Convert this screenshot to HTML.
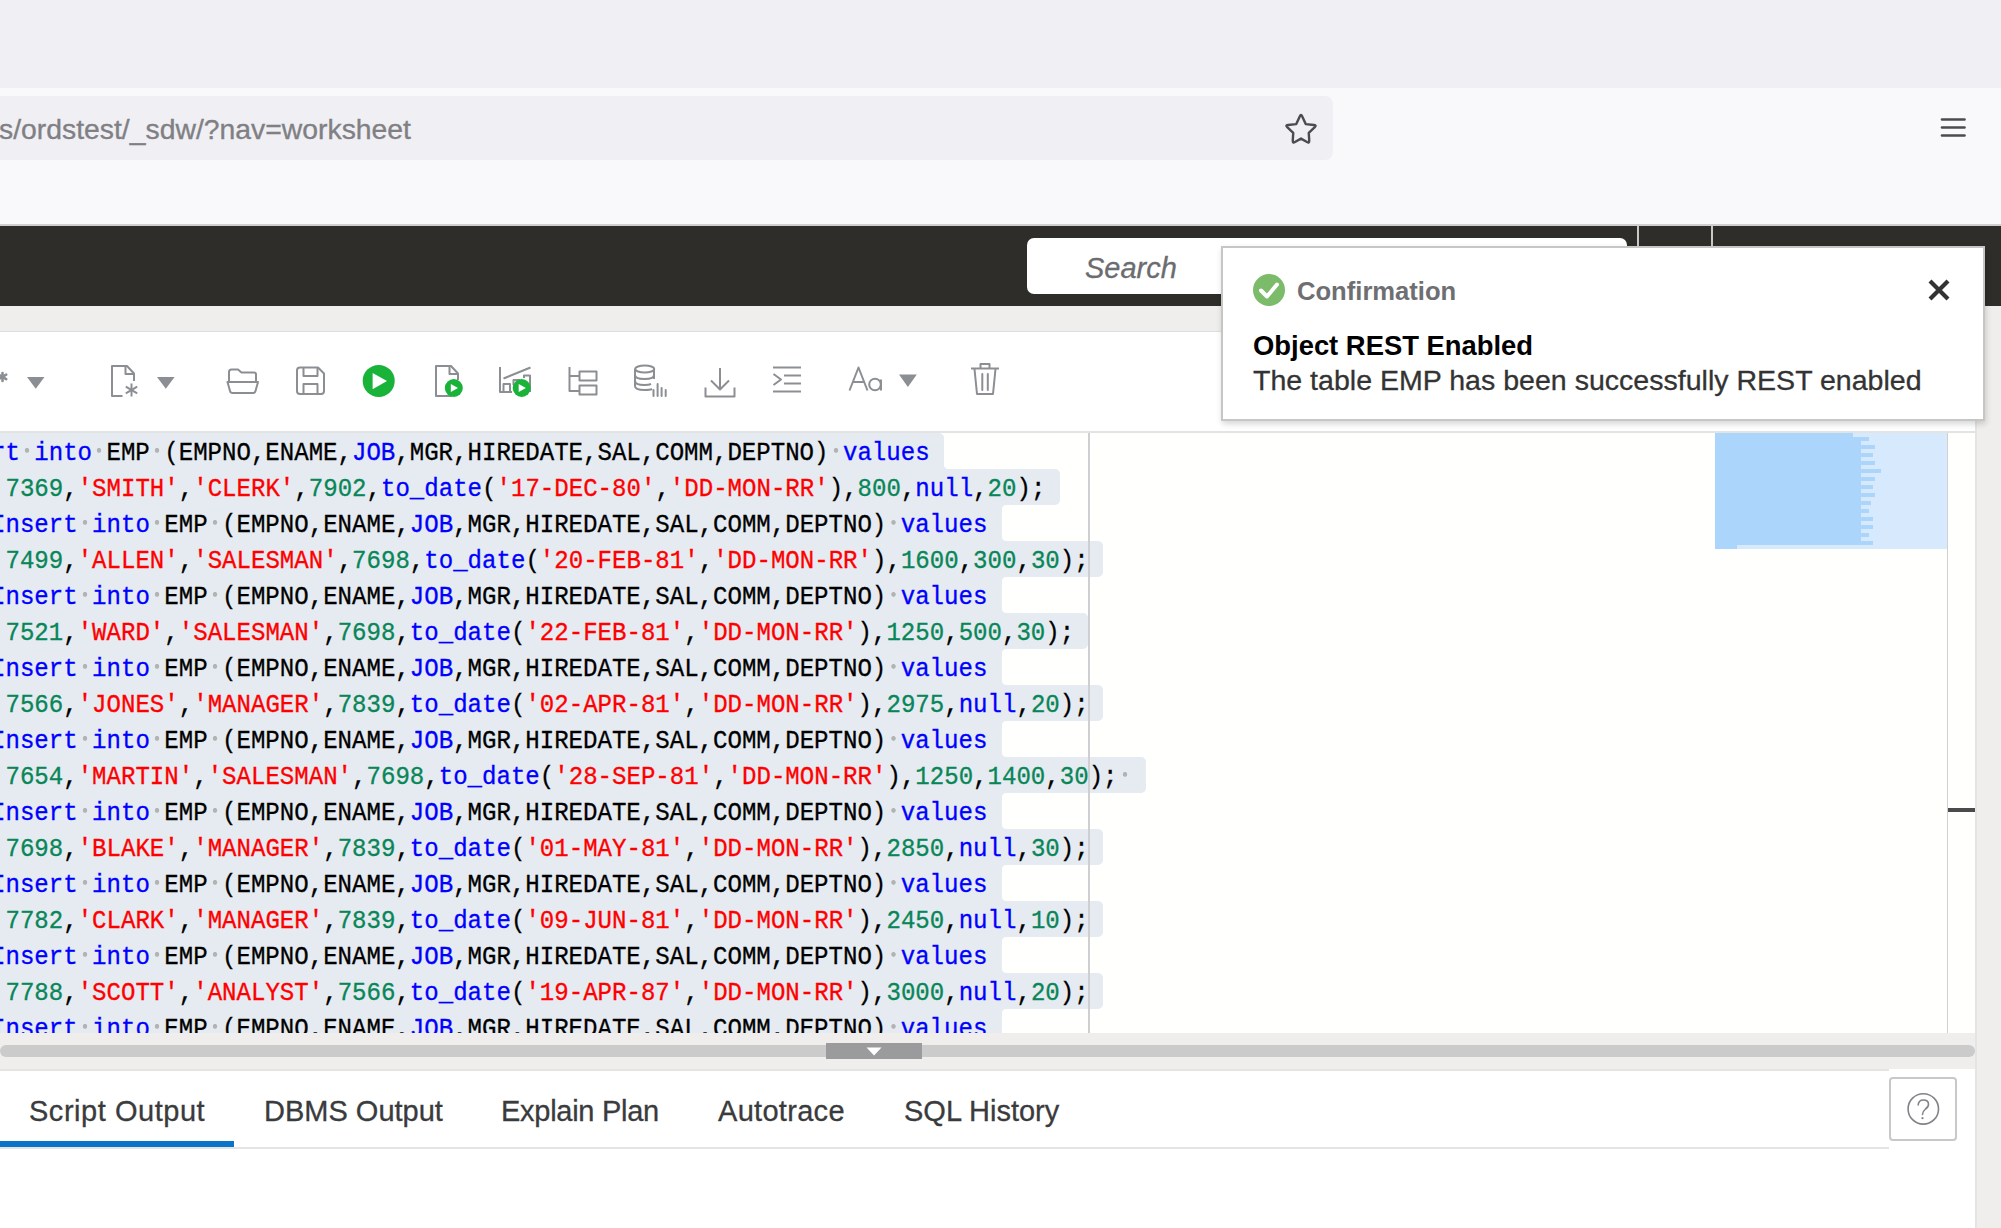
<!DOCTYPE html>
<html><head><meta charset="utf-8">
<style>
*{margin:0;padding:0;box-sizing:border-box}
html,body{width:2001px;height:1228px;overflow:hidden;background:#fff;font-family:"Liberation Sans",sans-serif}
.a{position:absolute}
#tabstrip{left:0;top:0;width:2001px;height:88px;background:#f0eff4}
#toolbar{left:0;top:88px;width:2001px;height:136px;background:#f9f9fb}
#tbline{left:0;top:224px;width:2001px;height:2px;background:#cfcfd1}
#url{left:-20px;top:96px;width:1353px;height:64px;background:#f0f0f4;border-radius:8px}
#urltext{left:-1px;top:112.5px;font-size:28.35px;color:#808084;-webkit-text-stroke:0.35px #808084;white-space:nowrap;letter-spacing:0}
#darkbar{left:0;top:226px;width:2001px;height:80px;background:#2e2d29}
#sep1{left:1637px;top:226px;width:2px;height:30px;background:#c9c9c9}
#sep2{left:1711px;top:226px;width:2px;height:30px;background:#c9c9c9}
#search{left:1027px;top:238px;width:600px;height:56px;background:#fff;border-radius:7px}
#searchtext{left:1085px;top:252px;font-size:29px;font-style:italic;color:#6b6c70;-webkit-text-stroke:0.3px #6b6c70;white-space:nowrap}
#band{left:0;top:306px;width:2001px;height:922px;background:#efeeec}
#bandedge{left:1975px;top:306px;width:2px;height:922px;background:#e3e4e4}
#panel{left:0;top:331px;width:1975px;height:897px;background:#fff;border-top:1px solid #dedede}
#editor{left:0;top:431px;width:1975px;height:602px;background:#fffffe;overflow:hidden;border-top:2px solid #e2e4e4}
#split{left:0;top:1033px;width:1975px;height:36px;background:#efeeec}
#splitbar{left:0;top:1045px;width:1975px;height:12px;background:#cbcbcb;border-radius:6px}
#handle{left:826px;top:1043px;width:96px;height:16px;background:#9b9b9d}
#tabs{left:0;top:1069px;width:1975px;height:159px;background:#fff}
#tabtop{left:0;top:1069px;width:1889px;height:2px;background:#e4e4e4}
#tabbot{left:0;top:1147px;width:1889px;height:2px;background:#e4e4e4}
#tabul{left:0;top:1141px;width:234px;height:6px;background:#0b74c8}
.tab{position:absolute;top:1095px;font-size:29px;color:#3a3b3d;-webkit-text-stroke:0.3px #3a3b3d;white-space:nowrap}
#help{left:1889px;top:1077px;width:68px;height:64px;border:2px solid #c8c8c8;border-radius:4px;background:#fff}
.sl{position:absolute;height:36px;background:#e5ebf1}
.fl{position:absolute;width:5px;height:5px}
.ln{position:absolute;height:36px;line-height:36px;margin-top:2.6px;transform:scaleY(1.09);transform-origin:0 24.4px;font-family:"Liberation Mono",monospace;font-size:24.07px;white-space:pre;color:#000;-webkit-text-stroke:0.3px currentColor}
.k{color:#0000ff}.i{color:#000}.s{color:#ff0000}.n{color:#098658}.p{color:#000}.w{display:inline-block;width:14.44px;height:36px;vertical-align:top;background:radial-gradient(circle at 50% 15.2px,#b3b3b3 1.8px,rgba(179,179,179,0) 2.6px)}
#margin{left:1087.5px;top:0;width:2px;height:600px;background:#cfcfd2}
#mm1{left:1715px;top:0;width:232px;height:116px;background:#d6e9fd}
#mmline{left:1947px;top:0;width:1px;height:600px;background:#d0d0d0}
#mmark{left:1948px;top:375px;width:27px;height:4px;background:#4a4b4d}
#toast{left:1221px;top:246px;width:764px;height:175px;background:#fff;border:2px solid #c6c6c6;box-shadow:1px 3px 6px rgba(0,0,0,0.16)}
#t1{left:1297px;top:277px;font-size:25.6px;font-weight:bold;color:#6e6f72;white-space:nowrap}
#t2{left:1253px;top:330px;font-size:27.4px;font-weight:bold;color:#000;white-space:nowrap}
#t3{left:1253px;top:364px;font-size:28.55px;color:#333;-webkit-text-stroke:0.3px #333;white-space:nowrap}
</style></head><body>
<div id="tabstrip" class="a"></div>
<div id="toolbar" class="a"></div>
<div id="tbline" class="a"></div>
<div id="url" class="a"></div>
<div id="urltext" class="a">s/ordstest/_sdw/?nav=worksheet</div>
<svg class="a" style="left:0;top:0" width="2001" height="226">
<path d="M1296.50 123.80 L1299.92 116.36 Q1301.00 114.00 1302.08 116.36 L1305.50 123.80 L1313.42 124.70 Q1316.00 125.00 1314.11 126.79 L1308.40 132.20 L1308.84 139.60 Q1309.00 142.20 1306.75 140.90 L1301.00 137.60 L1295.25 140.90 Q1293.00 142.20 1293.16 139.60 L1293.60 132.20 L1287.89 126.79 Q1286.00 125.00 1288.58 124.70 Z" fill="none" stroke="#4b4c50" stroke-width="2.3" stroke-linejoin="round" transform="translate(1301 128.5) scale(1.05) translate(-1301 -128)"/>
<g stroke="#4b4c50" stroke-width="2.6" stroke-linecap="round"><line x1="1942" y1="119.5" x2="1964.5" y2="119.5"/><line x1="1942" y1="127.5" x2="1964.5" y2="127.5"/><line x1="1942" y1="135.5" x2="1964.5" y2="135.5"/></g>
</svg>
<div id="darkbar" class="a"></div>
<div id="sep1" class="a"></div>
<div id="sep2" class="a"></div>
<div id="search" class="a"></div>
<div id="searchtext" class="a">Search</div>
<div id="band" class="a"></div>
<div id="bandedge" class="a"></div>
<div id="panel" class="a"></div>
<svg class="a" style="left:0;top:340px" width="1100" height="70" viewBox="0 340 1100 70">
<g fill="none" stroke="#8b8e92" stroke-width="2" stroke-linejoin="round">
 <!-- partial asterisk -->
 <g stroke-width="2.6" stroke-linecap="round"><line x1="2.5" y1="373" x2="2.5" y2="381"/><line x1="-1.5" y1="374.7" x2="6.2" y2="379.2"/><line x1="-1.5" y1="379.2" x2="6.2" y2="374.7"/></g>
 <!-- new doc -->
 <path d="M122.5 396 L112 396 L112 366 L127 366 L134 373.5 L134 381"/>
 <path d="M125.5 366 L125.5 374 L134 374"/>
 <line x1="131.5" y1="383.5" x2="131.5" y2="396.5"/><line x1="125.8" y1="386.7" x2="137.2" y2="393.3"/><line x1="125.8" y1="393.3" x2="137.2" y2="386.7"/>
 <!-- folder -->
 <path d="M229 381 L229 372 Q229 369.5 231.5 369.5 L238 369.5 L241.5 372.5 L254 372.5 Q256 372.5 256 374.5 L256 381"/>
 <path d="M227.5 382 L258 382 L255.5 391 Q255 393 253 393 L232.5 393 Q230.5 393 230 391 Z"/>
 <!-- save -->
 <path d="M300 367.5 L318 367.5 L324 373.5 L324 391 Q324 394 321 394 L300 394 Q297 394 297 391 L297 370.5 Q297 367.5 300 367.5 Z"/>
 <path d="M303.5 367.5 L303.5 376 L317.5 376 L317.5 368"/>
 <path d="M303.5 394 L303.5 384 L317.5 384 L317.5 394"/>
 <!-- run script doc -->
 <path d="M452 396 L436 396 L436 366 L451 366 L458 373.5 L458 380"/>
 <path d="M449.5 366 L449.5 374 L458 374"/>
 <!-- chart -->
 <path d="M500 367 L500 392 L512 392"/>
 <path d="M503.5 392 L503.5 384 L510 384 L510 392"/>
 <path d="M513.5 385 L513.5 380 L520 380"/>
 <path d="M524 378 L524 375.5 L530 375.5 L530 392"/>
 <line x1="503.5" y1="378.5" x2="530.5" y2="367.5"/>
 <!-- tree -->
 <path d="M569.5 367 L569.5 391 L579.5 391"/>
 <line x1="569.5" y1="376" x2="579.5" y2="376"/>
 <rect x="579.5" y="371.5" width="17" height="9"/>
 <rect x="579.5" y="385.5" width="17" height="9"/>
 <!-- db -->
 <ellipse cx="644.7" cy="369" rx="9.5" ry="3.6"/>
 <path d="M635 369 L635 386 Q635 390 644.5 390 Q650 390 652 389"/>
 <path d="M654 369 L654 379"/>
 <path d="M635 375 Q635 379 644.5 379 Q654 379 654 375"/>
 <path d="M635 381 Q635 385 644.5 385 Q649 385 651 384"/>
 <g stroke-linecap="round"><line x1="653.5" y1="390" x2="653.5" y2="396"/><line x1="657.6" y1="384" x2="657.6" y2="396"/><line x1="661.6" y1="388" x2="661.6" y2="396"/><line x1="665.7" y1="390" x2="665.7" y2="396"/></g>
 <!-- download -->
 <line x1="720" y1="368" x2="720" y2="389"/>
 <path d="M711 380.5 L720 389.5 L729 380.5"/>
 <path d="M705.5 387.5 L705.5 396.5 L734.5 396.5 L734.5 387.5"/>
 <!-- format -->
 <line x1="773" y1="367.5" x2="801" y2="367.5"/><line x1="784" y1="375.5" x2="801" y2="375.5"/><line x1="784" y1="383.5" x2="801" y2="383.5"/><line x1="773" y1="391.5" x2="801" y2="391.5"/>
 <path d="M773.5 374 L781 379.5 L773.5 385"/>
 <!-- Aa -->
 <path d="M849.5 390.5 L858.5 367.5 L867.5 390.5"/>
 <line x1="852.8" y1="382" x2="864.2" y2="382"/>
 <circle cx="875" cy="384.5" r="5.8"/>
 <line x1="881" y1="379.5" x2="881" y2="390.5"/>
 <!-- trash -->
 <line x1="971" y1="368.5" x2="999" y2="368.5"/>
 <path d="M980.5 368 L980.5 364 L989.5 364 L989.5 368"/>
 <path d="M974.5 369 L977 394 L993 394 L995.5 369"/>
 <g stroke-linecap="round"><line x1="982.3" y1="374" x2="982.3" y2="390"/><line x1="987.8" y1="374" x2="987.8" y2="390"/></g>
</g>
<g fill="#8b8e92">
 <path d="M27 377 L44.5 377 L35.75 388.7 Z"/>
 <path d="M157 377 L174.6 377 L165.8 388.7 Z"/>
 <path d="M899 374.5 L916.8 374.5 L907.9 387 Z"/>
</g>
<g fill="#19b33a">
 <circle cx="378.7" cy="380.9" r="16"/>
 <circle cx="453.8" cy="388" r="9"/>
 <circle cx="521.7" cy="388" r="9"/>
</g>
<g fill="#fff">
 <path d="M372.6 372.9 L387 381 L372.6 389.3 Z"/>
 <path d="M450.8 384 L458 388 L450.8 392 Z"/>
 <path d="M518.7 384 L525.9 388 L518.7 392 Z"/>
</g>
</svg>
<div id="editor" class="a">
<div class="sl" style="top:0px;left:-20px;width:964.0px;border-radius:0 5px 0px 0"></div>
<div class="fl" style="top:31px;left:944.0px;background:radial-gradient(circle at 100% 0,#fffffe 5px,#e5ebf1 5.6px)"></div>
<div class="sl" style="top:36px;left:-20px;width:1079.6px;border-radius:0 5px 5px 0"></div>
<div class="fl" style="top:72px;left:1001.8px;background:radial-gradient(circle at 100% 100%,#fffffe 5px,#e5ebf1 5.6px)"></div>
<div class="sl" style="top:72px;left:-20px;width:1021.8px;border-radius:0 0px 0px 0"></div>
<div class="fl" style="top:103px;left:1001.8px;background:radial-gradient(circle at 100% 0,#fffffe 5px,#e5ebf1 5.6px)"></div>
<div class="sl" style="top:108px;left:-20px;width:1122.9px;border-radius:0 5px 5px 0"></div>
<div class="fl" style="top:144px;left:1001.8px;background:radial-gradient(circle at 100% 100%,#fffffe 5px,#e5ebf1 5.6px)"></div>
<div class="sl" style="top:144px;left:-20px;width:1021.8px;border-radius:0 0px 0px 0"></div>
<div class="fl" style="top:175px;left:1001.8px;background:radial-gradient(circle at 100% 0,#fffffe 5px,#e5ebf1 5.6px)"></div>
<div class="sl" style="top:180px;left:-20px;width:1108.4px;border-radius:0 5px 5px 0"></div>
<div class="fl" style="top:216px;left:1001.8px;background:radial-gradient(circle at 100% 100%,#fffffe 5px,#e5ebf1 5.6px)"></div>
<div class="sl" style="top:216px;left:-20px;width:1021.8px;border-radius:0 0px 0px 0"></div>
<div class="fl" style="top:247px;left:1001.8px;background:radial-gradient(circle at 100% 0,#fffffe 5px,#e5ebf1 5.6px)"></div>
<div class="sl" style="top:252px;left:-20px;width:1122.9px;border-radius:0 5px 5px 0"></div>
<div class="fl" style="top:288px;left:1001.8px;background:radial-gradient(circle at 100% 100%,#fffffe 5px,#e5ebf1 5.6px)"></div>
<div class="sl" style="top:288px;left:-20px;width:1021.8px;border-radius:0 0px 0px 0"></div>
<div class="fl" style="top:319px;left:1001.8px;background:radial-gradient(circle at 100% 0,#fffffe 5px,#e5ebf1 5.6px)"></div>
<div class="sl" style="top:324px;left:-20px;width:1166.2px;border-radius:0 5px 5px 0"></div>
<div class="fl" style="top:360px;left:1001.8px;background:radial-gradient(circle at 100% 100%,#fffffe 5px,#e5ebf1 5.6px)"></div>
<div class="sl" style="top:360px;left:-20px;width:1021.8px;border-radius:0 0px 0px 0"></div>
<div class="fl" style="top:391px;left:1001.8px;background:radial-gradient(circle at 100% 0,#fffffe 5px,#e5ebf1 5.6px)"></div>
<div class="sl" style="top:396px;left:-20px;width:1122.9px;border-radius:0 5px 5px 0"></div>
<div class="fl" style="top:432px;left:1001.8px;background:radial-gradient(circle at 100% 100%,#fffffe 5px,#e5ebf1 5.6px)"></div>
<div class="sl" style="top:432px;left:-20px;width:1021.8px;border-radius:0 0px 0px 0"></div>
<div class="fl" style="top:463px;left:1001.8px;background:radial-gradient(circle at 100% 0,#fffffe 5px,#e5ebf1 5.6px)"></div>
<div class="sl" style="top:468px;left:-20px;width:1122.9px;border-radius:0 5px 5px 0"></div>
<div class="fl" style="top:504px;left:1001.8px;background:radial-gradient(circle at 100% 100%,#fffffe 5px,#e5ebf1 5.6px)"></div>
<div class="sl" style="top:504px;left:-20px;width:1021.8px;border-radius:0 0px 0px 0"></div>
<div class="fl" style="top:535px;left:1001.8px;background:radial-gradient(circle at 100% 0,#fffffe 5px,#e5ebf1 5.6px)"></div>
<div class="sl" style="top:540px;left:-20px;width:1122.9px;border-radius:0 5px 5px 0"></div>
<div class="fl" style="top:576px;left:1001.8px;background:radial-gradient(circle at 100% 100%,#fffffe 5px,#e5ebf1 5.6px)"></div>
<div class="sl" style="top:576px;left:-20px;width:1021.8px;border-radius:0 0px 5px 0"></div>
<div class="ln" style="top:0px;left:-66.8px"><span class="k">Insert</span><span class="w"> </span><span class="k">into</span><span class="w"> </span><span class="i">EMP</span><span class="w"> </span><span class="p">(EMPNO,ENAME,</span><span class="k">JOB</span><span class="p">,MGR,HIREDATE,SAL,COMM,DEPTNO)</span><span class="w"> </span><span class="k">values</span></div>
<div class="ln" style="top:36px;left:-9.0px"><span class="p"> </span><span class="n">7369</span><span class="p">,</span><span class="s">&#x27;SMITH&#x27;</span><span class="p">,</span><span class="s">&#x27;CLERK&#x27;</span><span class="p">,</span><span class="n">7902</span><span class="p">,</span><span class="k">to_date</span><span class="p">(</span><span class="s">&#x27;17-DEC-80&#x27;</span><span class="p">,</span><span class="s">&#x27;DD-MON-RR&#x27;</span><span class="p">),</span><span class="n">800</span><span class="p">,</span><span class="k">null</span><span class="p">,</span><span class="n">20</span><span class="p">);</span></div>
<div class="ln" style="top:72px;left:-9.0px"><span class="k">Insert</span><span class="w"> </span><span class="k">into</span><span class="w"> </span><span class="i">EMP</span><span class="w"> </span><span class="p">(EMPNO,ENAME,</span><span class="k">JOB</span><span class="p">,MGR,HIREDATE,SAL,COMM,DEPTNO)</span><span class="w"> </span><span class="k">values</span></div>
<div class="ln" style="top:108px;left:-9.0px"><span class="p"> </span><span class="n">7499</span><span class="p">,</span><span class="s">&#x27;ALLEN&#x27;</span><span class="p">,</span><span class="s">&#x27;SALESMAN&#x27;</span><span class="p">,</span><span class="n">7698</span><span class="p">,</span><span class="k">to_date</span><span class="p">(</span><span class="s">&#x27;20-FEB-81&#x27;</span><span class="p">,</span><span class="s">&#x27;DD-MON-RR&#x27;</span><span class="p">),</span><span class="n">1600</span><span class="p">,</span><span class="n">300</span><span class="p">,</span><span class="n">30</span><span class="p">);</span></div>
<div class="ln" style="top:144px;left:-9.0px"><span class="k">Insert</span><span class="w"> </span><span class="k">into</span><span class="w"> </span><span class="i">EMP</span><span class="w"> </span><span class="p">(EMPNO,ENAME,</span><span class="k">JOB</span><span class="p">,MGR,HIREDATE,SAL,COMM,DEPTNO)</span><span class="w"> </span><span class="k">values</span></div>
<div class="ln" style="top:180px;left:-9.0px"><span class="p"> </span><span class="n">7521</span><span class="p">,</span><span class="s">&#x27;WARD&#x27;</span><span class="p">,</span><span class="s">&#x27;SALESMAN&#x27;</span><span class="p">,</span><span class="n">7698</span><span class="p">,</span><span class="k">to_date</span><span class="p">(</span><span class="s">&#x27;22-FEB-81&#x27;</span><span class="p">,</span><span class="s">&#x27;DD-MON-RR&#x27;</span><span class="p">),</span><span class="n">1250</span><span class="p">,</span><span class="n">500</span><span class="p">,</span><span class="n">30</span><span class="p">);</span></div>
<div class="ln" style="top:216px;left:-9.0px"><span class="k">Insert</span><span class="w"> </span><span class="k">into</span><span class="w"> </span><span class="i">EMP</span><span class="w"> </span><span class="p">(EMPNO,ENAME,</span><span class="k">JOB</span><span class="p">,MGR,HIREDATE,SAL,COMM,DEPTNO)</span><span class="w"> </span><span class="k">values</span></div>
<div class="ln" style="top:252px;left:-9.0px"><span class="p"> </span><span class="n">7566</span><span class="p">,</span><span class="s">&#x27;JONES&#x27;</span><span class="p">,</span><span class="s">&#x27;MANAGER&#x27;</span><span class="p">,</span><span class="n">7839</span><span class="p">,</span><span class="k">to_date</span><span class="p">(</span><span class="s">&#x27;02-APR-81&#x27;</span><span class="p">,</span><span class="s">&#x27;DD-MON-RR&#x27;</span><span class="p">),</span><span class="n">2975</span><span class="p">,</span><span class="k">null</span><span class="p">,</span><span class="n">20</span><span class="p">);</span></div>
<div class="ln" style="top:288px;left:-9.0px"><span class="k">Insert</span><span class="w"> </span><span class="k">into</span><span class="w"> </span><span class="i">EMP</span><span class="w"> </span><span class="p">(EMPNO,ENAME,</span><span class="k">JOB</span><span class="p">,MGR,HIREDATE,SAL,COMM,DEPTNO)</span><span class="w"> </span><span class="k">values</span></div>
<div class="ln" style="top:324px;left:-9.0px"><span class="p"> </span><span class="n">7654</span><span class="p">,</span><span class="s">&#x27;MARTIN&#x27;</span><span class="p">,</span><span class="s">&#x27;SALESMAN&#x27;</span><span class="p">,</span><span class="n">7698</span><span class="p">,</span><span class="k">to_date</span><span class="p">(</span><span class="s">&#x27;28-SEP-81&#x27;</span><span class="p">,</span><span class="s">&#x27;DD-MON-RR&#x27;</span><span class="p">),</span><span class="n">1250</span><span class="p">,</span><span class="n">1400</span><span class="p">,</span><span class="n">30</span><span class="p">);</span><span class="w"> </span></div>
<div class="ln" style="top:360px;left:-9.0px"><span class="k">Insert</span><span class="w"> </span><span class="k">into</span><span class="w"> </span><span class="i">EMP</span><span class="w"> </span><span class="p">(EMPNO,ENAME,</span><span class="k">JOB</span><span class="p">,MGR,HIREDATE,SAL,COMM,DEPTNO)</span><span class="w"> </span><span class="k">values</span></div>
<div class="ln" style="top:396px;left:-9.0px"><span class="p"> </span><span class="n">7698</span><span class="p">,</span><span class="s">&#x27;BLAKE&#x27;</span><span class="p">,</span><span class="s">&#x27;MANAGER&#x27;</span><span class="p">,</span><span class="n">7839</span><span class="p">,</span><span class="k">to_date</span><span class="p">(</span><span class="s">&#x27;01-MAY-81&#x27;</span><span class="p">,</span><span class="s">&#x27;DD-MON-RR&#x27;</span><span class="p">),</span><span class="n">2850</span><span class="p">,</span><span class="k">null</span><span class="p">,</span><span class="n">30</span><span class="p">);</span></div>
<div class="ln" style="top:432px;left:-9.0px"><span class="k">Insert</span><span class="w"> </span><span class="k">into</span><span class="w"> </span><span class="i">EMP</span><span class="w"> </span><span class="p">(EMPNO,ENAME,</span><span class="k">JOB</span><span class="p">,MGR,HIREDATE,SAL,COMM,DEPTNO)</span><span class="w"> </span><span class="k">values</span></div>
<div class="ln" style="top:468px;left:-9.0px"><span class="p"> </span><span class="n">7782</span><span class="p">,</span><span class="s">&#x27;CLARK&#x27;</span><span class="p">,</span><span class="s">&#x27;MANAGER&#x27;</span><span class="p">,</span><span class="n">7839</span><span class="p">,</span><span class="k">to_date</span><span class="p">(</span><span class="s">&#x27;09-JUN-81&#x27;</span><span class="p">,</span><span class="s">&#x27;DD-MON-RR&#x27;</span><span class="p">),</span><span class="n">2450</span><span class="p">,</span><span class="k">null</span><span class="p">,</span><span class="n">10</span><span class="p">);</span></div>
<div class="ln" style="top:504px;left:-9.0px"><span class="k">Insert</span><span class="w"> </span><span class="k">into</span><span class="w"> </span><span class="i">EMP</span><span class="w"> </span><span class="p">(EMPNO,ENAME,</span><span class="k">JOB</span><span class="p">,MGR,HIREDATE,SAL,COMM,DEPTNO)</span><span class="w"> </span><span class="k">values</span></div>
<div class="ln" style="top:540px;left:-9.0px"><span class="p"> </span><span class="n">7788</span><span class="p">,</span><span class="s">&#x27;SCOTT&#x27;</span><span class="p">,</span><span class="s">&#x27;ANALYST&#x27;</span><span class="p">,</span><span class="n">7566</span><span class="p">,</span><span class="k">to_date</span><span class="p">(</span><span class="s">&#x27;19-APR-87&#x27;</span><span class="p">,</span><span class="s">&#x27;DD-MON-RR&#x27;</span><span class="p">),</span><span class="n">3000</span><span class="p">,</span><span class="k">null</span><span class="p">,</span><span class="n">20</span><span class="p">);</span></div>
<div class="ln" style="top:576px;left:-9.0px"><span class="k">Insert</span><span class="w"> </span><span class="k">into</span><span class="w"> </span><span class="i">EMP</span><span class="w"> </span><span class="p">(EMPNO,ENAME,</span><span class="k">JOB</span><span class="p">,MGR,HIREDATE,SAL,COMM,DEPTNO)</span><span class="w"> </span><span class="k">values</span></div>
<div id="margin" class="a"></div>
<div id="mm1" class="a"></div>
<div class="a" style="left:1715px;top:0;width:138px;height:4px;background:#acd5fc"></div>
<div class="a" style="left:1715px;top:4px;width:154px;height:4px;background:#acd5fc"></div>
<div class="a" style="left:1715px;top:8px;width:146px;height:4px;background:#acd5fc"></div>
<div class="a" style="left:1715px;top:12px;width:160px;height:4px;background:#acd5fc"></div>
<div class="a" style="left:1715px;top:16px;width:146px;height:4px;background:#acd5fc"></div>
<div class="a" style="left:1715px;top:20px;width:158px;height:4px;background:#acd5fc"></div>
<div class="a" style="left:1715px;top:24px;width:146px;height:4px;background:#acd5fc"></div>
<div class="a" style="left:1715px;top:28px;width:160px;height:4px;background:#acd5fc"></div>
<div class="a" style="left:1715px;top:32px;width:146px;height:4px;background:#acd5fc"></div>
<div class="a" style="left:1715px;top:36px;width:166px;height:4px;background:#acd5fc"></div>
<div class="a" style="left:1715px;top:40px;width:146px;height:4px;background:#acd5fc"></div>
<div class="a" style="left:1715px;top:44px;width:160px;height:4px;background:#acd5fc"></div>
<div class="a" style="left:1715px;top:48px;width:146px;height:4px;background:#acd5fc"></div>
<div class="a" style="left:1715px;top:52px;width:158px;height:4px;background:#acd5fc"></div>
<div class="a" style="left:1715px;top:56px;width:146px;height:4px;background:#acd5fc"></div>
<div class="a" style="left:1715px;top:60px;width:160px;height:4px;background:#acd5fc"></div>
<div class="a" style="left:1715px;top:64px;width:146px;height:4px;background:#acd5fc"></div>
<div class="a" style="left:1715px;top:68px;width:156px;height:4px;background:#acd5fc"></div>
<div class="a" style="left:1715px;top:72px;width:146px;height:4px;background:#acd5fc"></div>
<div class="a" style="left:1715px;top:76px;width:154px;height:4px;background:#acd5fc"></div>
<div class="a" style="left:1715px;top:80px;width:146px;height:4px;background:#acd5fc"></div>
<div class="a" style="left:1715px;top:84px;width:158px;height:4px;background:#acd5fc"></div>
<div class="a" style="left:1715px;top:88px;width:146px;height:4px;background:#acd5fc"></div>
<div class="a" style="left:1715px;top:92px;width:158px;height:4px;background:#acd5fc"></div>
<div class="a" style="left:1715px;top:96px;width:146px;height:4px;background:#acd5fc"></div>
<div class="a" style="left:1715px;top:100px;width:154px;height:4px;background:#acd5fc"></div>
<div class="a" style="left:1715px;top:104px;width:146px;height:4px;background:#acd5fc"></div>
<div class="a" style="left:1715px;top:108px;width:158px;height:4px;background:#acd5fc"></div>
<div class="a" style="left:1715px;top:112px;width:22px;height:4px;background:#acd5fc"></div>
<div id="mmline" class="a"></div>
<div id="mmark" class="a"></div>
</div>
<div id="split" class="a"></div>
<div id="splitbar" class="a"></div>
<div id="handle" class="a"></div>
<svg class="a" style="left:866px;top:1047px" width="16" height="9"><path d="M0.5 0.5 L15.5 0.5 L8 8.5 Z" fill="#fff"/></svg>
<div id="tabs" class="a"></div>
<div id="tabtop" class="a"></div>
<div id="tabbot" class="a"></div>
<div id="tabul" class="a"></div>
<div class="tab" style="left:29px;letter-spacing:0.53px">Script Output</div>
<div class="tab" style="left:264px">DBMS Output</div>
<div class="tab" style="left:501px;letter-spacing:-0.27px">Explain Plan</div>
<div class="tab" style="left:718px;letter-spacing:0.3px">Autotrace</div>
<div class="tab" style="left:904px">SQL History</div>
<div id="help" class="a"></div>
<svg class="a" style="left:1889px;top:1077px" width="68" height="64">
<circle cx="34.3" cy="31.9" r="15.2" fill="none" stroke="#808387" stroke-width="1.6"/>
<path d="M29.2 28 Q29.5 23 34.5 23 Q39.5 23 39.5 27.3 Q39.5 30 36.5 32 Q33.5 34.5 33.5 37.5" fill="none" stroke="#808387" stroke-width="1.6" stroke-linecap="round"/>
<circle cx="33.5" cy="41.2" r="1.1" fill="#808387"/>
</svg>
<div id="toast" class="a"></div>
<svg class="a" style="left:1250px;top:270px" width="40" height="40">
<circle cx="19" cy="20" r="16" fill="#7cbb69"/>
<path d="M11 20.5 L17 26.5 L27 14.5" fill="none" stroke="#fff" stroke-width="4" stroke-linecap="round" stroke-linejoin="round"/>
</svg>
<div id="t1" class="a">Confirmation</div>
<svg class="a" style="left:1925px;top:276px" width="28" height="28">
<path d="M5 5 L23 23 M23 5 L5 23" stroke="#333" stroke-width="4.2"/>
</svg>
<div id="t2" class="a">Object REST Enabled</div>
<div id="t3" class="a">The table EMP has been successfully REST enabled</div>
</body></html>
